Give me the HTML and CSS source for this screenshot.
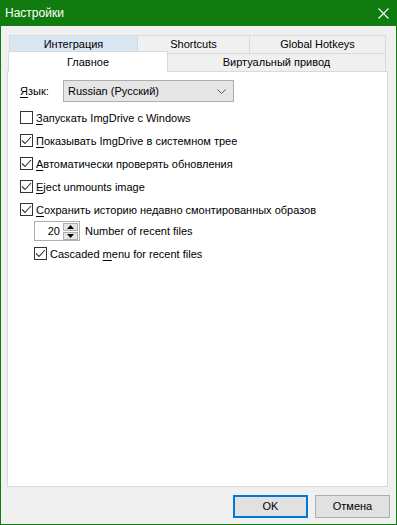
FILE: index.html
```html
<!DOCTYPE html>
<html lang="ru">
<head>
<meta charset="utf-8">
<title>Настройки</title>
<link rel="stylesheet" href="styles.css">
</head>
<body>
<div class="window">
  <div class="titlebar">
    <span class="title">Настройки</span>
    <svg class="close" width="11" height="11" viewBox="0 0 11 11"><path d="M0.5 0.5L10.5 10.5M10.5 0.5L0.5 10.5" stroke="#fff" stroke-width="1.1" fill="none"/></svg>
  </div>
  <div class="client">
    <div class="tabs">
      <div class="tabrow row1">
        <div class="tab hover t-int">Интеграция</div>
        <div class="tab t-short">Shortcuts</div>
        <div class="tab last t-hot">Global Hotkeys</div>
      </div>
      <div class="tabrow row2">
        <div class="tab selected">Главное</div>
        <div class="tab last t-virt">Виртуальный привод</div>
      </div>
    </div>
    <div class="panel">
      <div class="lang">
        <span class="lang-label"><u>Я</u>зык:</span>
        <div class="combo">
          <span>Russian (Русский)</span>
          <svg width="9" height="5" viewBox="0 0 9 5"><path d="M0.5 0.5L4.5 4.5L8.5 0.5" stroke="#555" stroke-width="1" fill="none"/></svg>
        </div>
      </div>
      <div class="options">
        <div class="row"><span class="cb"></span><span><u>З</u>апускать ImgDrive с Windows</span></div>
        <div class="row"><span class="cb checked"><svg width="11" height="11" viewBox="0 0 11 11"><path d="M1 5.5L4 8.5L10 2" stroke="#333" stroke-width="1.1" fill="none"/></svg></span><span><u>П</u>оказывать ImgDrive в системном трее</span></div>
        <div class="row"><span class="cb checked"><svg width="11" height="11" viewBox="0 0 11 11"><path d="M1 5.5L4 8.5L10 2" stroke="#333" stroke-width="1.1" fill="none"/></svg></span><span><u>А</u>втоматически проверять обновления</span></div>
        <div class="row"><span class="cb checked"><svg width="11" height="11" viewBox="0 0 11 11"><path d="M1 5.5L4 8.5L10 2" stroke="#333" stroke-width="1.1" fill="none"/></svg></span><span><u>E</u>ject unmounts image</span></div>
        <div class="row"><span class="cb checked"><svg width="11" height="11" viewBox="0 0 11 11"><path d="M1 5.5L4 8.5L10 2" stroke="#333" stroke-width="1.1" fill="none"/></svg></span><span><u>С</u>охранить историю недавно смонтированных образов</span></div>
        <div class="spinrow indent">
          <div class="spinedit">
            <span class="spinval">20</span>
            <div class="spinbtns">
              <div class="sbtn"><svg width="7" height="4" viewBox="0 0 7 4"><path d="M0 4L3.5 0L7 4Z" fill="#000"/></svg></div>
              <div class="sbtn"><svg width="7" height="4" viewBox="0 0 7 4"><path d="M0 0L3.5 4L7 0Z" fill="#000"/></svg></div>
            </div>
          </div>
          <span class="spinlabel">Number of recent files</span>
        </div>
        <div class="row indent cascade"><span class="cb checked"><svg width="11" height="11" viewBox="0 0 11 11"><path d="M1 5.5L4 8.5L10 2" stroke="#333" stroke-width="1.1" fill="none"/></svg></span><span>Cascaded <u>m</u>enu for recent files</span></div>
      </div>
    </div>
    <div class="buttons">
      <div class="btn default">OK</div>
      <div class="btn">Отмена</div>
    </div>
  </div>
</div>
</body>
</html>
```

FILE: styles.css
```css
* { box-sizing: border-box; }
html, body { margin: 0; padding: 0; }
body {
  width: 397px;
  height: 525px;
  overflow: hidden;
  font-family: "Liberation Sans", Arial, sans-serif;
  font-size: 11px;
  color: #000;
  background: #f0f0f0;
}
u { text-decoration-thickness: 1px; text-underline-offset: 2px; }

.window {
  width: 397px;
  height: 525px;
  border: 1px solid #107c10;
  border-top: 0;
  background: #f0f0f0;
  display: flex;
  flex-direction: column;
}
.titlebar {
  height: 26px;
  margin: 0 -1px;
  background: #107c10;
  color: #fff;
  display: flex;
  align-items: center;
  justify-content: space-between;
  padding-left: 5px;
  flex: none;
}
.title { font-size: 12px; line-height: 1; }
.close { margin-right: 8px; }

.client {
  flex: 1;
  display: flex;
  flex-direction: column;
  padding: 9px 0 0 6px;
}

.tabs { margin-left: 1px; width: 378px; }
.tabrow { display: flex; height: 18px; }
.row1 { margin-left: 1px; }
.tab {
  border-top: 1px solid #d9d9d9;
  border-left: 1px solid #d9d9d9;
  display: flex;
  align-items: center;
  justify-content: center;
  line-height: 1;
  background: #f0f0f0;
}
.tab.last { border-right: 1px solid #d9d9d9; }
.t-int { width: 128px; }
.t-short { width: 112px; }
.t-hot { width: 137px; }
.hover { background: #d8e6f2; }
.selected {
  width: 160px;
  height: 21px;
  margin-top: -2px;
  position: relative;
  z-index: 1;
  background: #fff;
  border-right: 1px solid #d9d9d9;
}
.t-virt { width: 218px; border-left: 0; }

.panel {
  width: 381px;
  height: 416px;
  border: 1px solid #d9d9d9;
  background: #fff;
  padding: 8px 0 0 12px;
  flex: none;
}
.lang { display: flex; align-items: center; height: 22px; }
.lang-label { width: 43px; }
.combo {
  width: 171px;
  height: 22px;
  border: 1px solid #adadad;
  background: #e5e5e5;
  display: flex;
  align-items: center;
  justify-content: space-between;
  padding: 0 7px 0 4px;
}
.options { margin-top: 4px; }
.row { display: flex; align-items: center; height: 23px; }
.cb {
  width: 13px;
  height: 13px;
  border: 1px solid #333;
  background: #fff;
  margin-right: 3px;
  display: flex;
  align-items: center;
  justify-content: center;
  flex: none;
}
.indent { margin-left: 14px; }
.cascade { margin-top: 1px; }

.spinrow { display: flex; align-items: center; height: 20px; }
.spinedit {
  width: 46px;
  height: 20px;
  border: 1px solid #adadad;
  background: #fff;
  display: flex;
  align-items: center;
  justify-content: flex-end;
  padding-right: 1px;
}
.spinval { margin-right: 3px; }
.spinbtns { display: flex; flex-direction: column; gap: 1px; }
.sbtn {
  width: 15px;
  height: 8px;
  border: 1px solid #adadad;
  background: #e5e5e5;
  display: flex;
  align-items: center;
  justify-content: center;
}
.spinlabel { margin-left: 5px; }

.buttons {
  display: flex;
  justify-content: flex-end;
  gap: 7px;
  padding: 8px 6px 0 0;
}
.btn {
  width: 75px;
  height: 23px;
  border: 1px solid #adadad;
  background: #e1e1e1;
  display: flex;
  align-items: center;
  justify-content: center;
  line-height: 1;
}
.btn.default { border: 2px solid #0078d7; }
```
